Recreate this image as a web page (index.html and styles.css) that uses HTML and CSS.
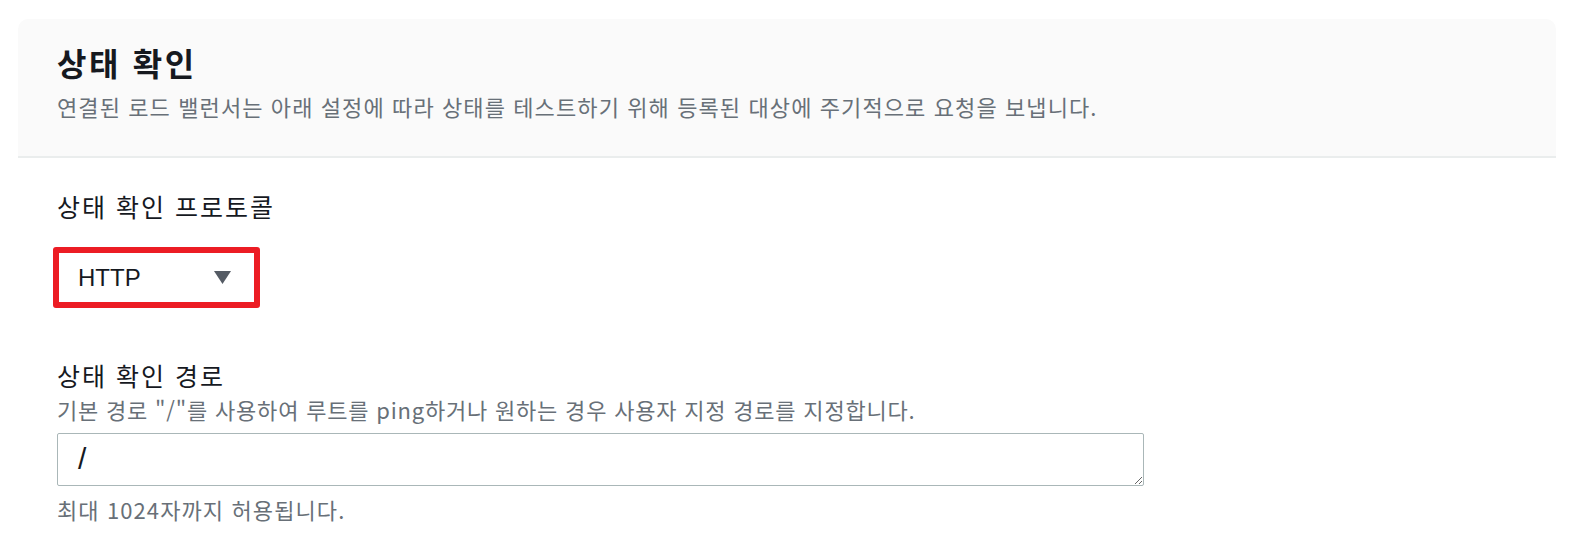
FILE: index.html
```html
<!DOCTYPE html>
<html lang="ko">
<head>
    <meta charset="UTF-8">
    <title>상태 확인</title>
    <link rel="stylesheet" href="styles.css">
</head>
<body>
    <div class="page">
        <div class="panel-head">
            <h2>상태 확인</h2>
            <p class="desc">연결된 로드 밸런서는 아래 설정에 따라 상태를 테스트하기 위해 등록된 대상에 주기적으로 요청을 보냅니다.</p>
        </div>
        <div class="panel-body">
            <div class="field">
                <label class="field-label">상태 확인 프로토콜</label>
                <div class="select">
                    <span>HTTP</span>
                    <svg class="caret" width="17" height="13" viewBox="0 0 17 13"><path d="M0 0 H17 L8.5 13 Z" fill="#545b64"/></svg>
                </div>
            </div>
            <div class="field path">
                <label class="field-label" for="path">상태 확인 경로</label>
                <p class="hint help">기본 경로 "/"를 사용하여 루트를 ping하거나 원하는 경우 사용자 지정 경로를 지정합니다.</p>
                <textarea id="path" rows="1">/</textarea>
                <p class="hint constraint">최대 1024자까지 허용됩니다.</p>
            </div>
        </div>
    </div>
</body>
</html>
```

FILE: styles.css
```css
body {
    margin: 0;
    background: #ffffff;
    font-family: "Noto Sans CJK KR", "Noto Sans", sans-serif;
    color: #16191f;
}
.page {
    padding: 19px 26px 0 18px;
}
.panel-head {
    background: #fafafa;
    border-radius: 10px 10px 0 0;
    border-bottom: 2px solid #eaeded;
    padding: 23px 40px 35px 39px;
}
.panel-head h2 {
    margin: 0;
    font-size: 32px;
    line-height: 40px;
    font-weight: 700;
    letter-spacing: 2.6px;
}
.desc {
    margin: 9px 0 0;
    font-size: 22px;
    line-height: 30px;
    color: #687078;
    letter-spacing: 1.1px;
}
.panel-body {
    padding: 0 39px;
}
.field-label {
    display: block;
    font-size: 25px;
    line-height: 32px;
    color: #16191f;
    letter-spacing: 2px;
}
.field:first-child .field-label {
    margin-top: 32px;
}
.select {
    display: flex;
    align-items: center;
    justify-content: space-between;
    box-sizing: border-box;
    width: 207px;
    height: 61px;
    margin: 25px 0 0 -4px;
    padding: 0 23px 0 19px;
    border: 6px solid #ec1c24;
    border-radius: 3px;
    background: #fff;
    font-family: "Liberation Sans", Arial, sans-serif;
    font-size: 24px;
}
.caret {
    display: block;
}
.path {
    margin-top: 51px;
}
.hint {
    margin: 3px 0 0;
    font-size: 22px;
    line-height: 30px;
    color: #687078;
    letter-spacing: 1.1px;
}
.help {
    letter-spacing: 0.8px;
}
textarea {
    display: block;
    box-sizing: border-box;
    width: 1087px;
    height: 53px;
    margin: 9px 0 0;
    padding: 5px 20px;
    border: 1px solid #aab7b8;
    border-radius: 2px;
    font-family: "Liberation Sans", Arial, sans-serif;
    font-size: 30px;
    line-height: 40px;
    color: #16191f;
}
.constraint {
    margin-top: 8px;
}
```
